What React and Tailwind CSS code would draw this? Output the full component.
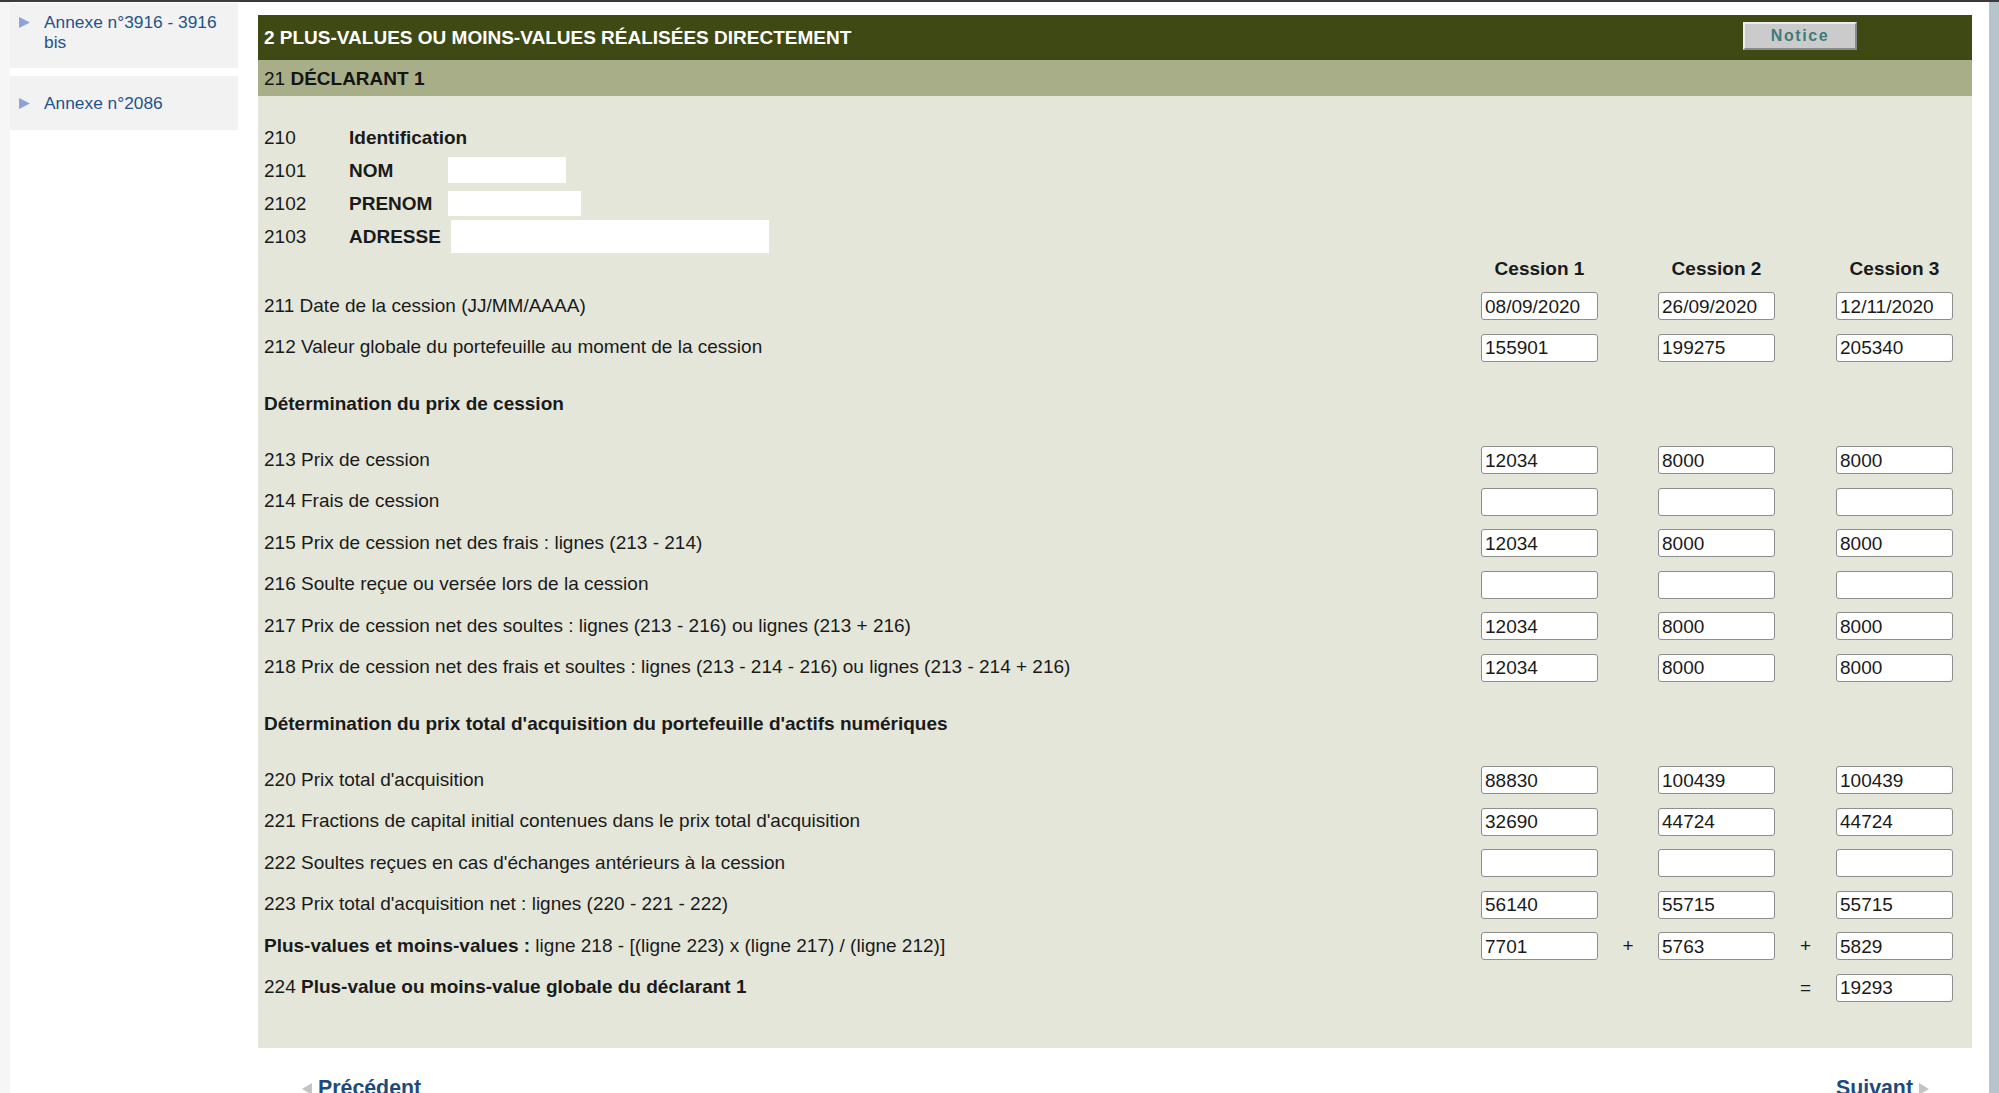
import React from "react";

const Box = ({ v }) => (
  <div className="w-[117px] h-[28px] bg-white border border-[#8e8e8e] rounded-[3px] pl-[3px] flex items-center text-[19px] text-[#1a1a1a] leading-none">
    {v}
  </div>
);

const Row = ({ label, vals, ops = ["", ""], eq = false }) => (
  <div className="h-[41.5px] flex items-center">
    <div className="flex-1 text-[19px] text-[#1a1a1a] leading-none whitespace-nowrap -mt-[2px]">{label}</div>
    {eq ? (
      <>
        <div className="w-[117px]" />
        <div className="w-[60px]" />
        <div className="w-[117px]" />
        <div className="w-[61px] text-center text-[19px] text-[#1a1a1a]">=</div>
        <Box v={vals[0]} />
      </>
    ) : (
      <>
        <Box v={vals[0]} />
        <div className="w-[60px] text-center text-[19px] text-[#1a1a1a]">{ops[0]}</div>
        <Box v={vals[1]} />
        <div className="w-[61px] text-center text-[19px] text-[#1a1a1a]">{ops[1]}</div>
        <Box v={vals[2]} />
      </>
    )}
  </div>
);

const Heading = ({ children }) => (
  <div className="h-[71px] flex items-center text-[19px] font-bold text-[#1a1a1a] leading-none pb-[2px]">{children}</div>
);

const Tri = () => (
  <svg width="13" height="13" viewBox="0 0 13 13" className="shrink-0">
    <polygon points="1,1 12,6.5 1,12" fill="#8ea2da" />
  </svg>
);

export default function App() {
  return (
    <div className="relative w-[1999px] h-[1093px] overflow-hidden bg-white font-['Liberation_Sans',Arial,sans-serif]">
      <div className="h-[2px] bg-[#3b3b3b]" />
      <div className="flex h-[1091px]">
        {/* Sidebar */}
        <div className="w-[258px] shrink-0 flex">
          <div className="w-[10px] bg-[#f6f6f6]" />
          <div className="w-[228px] pt-[1px] flex flex-col gap-[8px]">
            <div className="h-[65px] bg-[#f2f2f2] flex items-start pt-[9px] pl-[8px] gap-[13px]">
              <div className="pt-[4px]"><Tri /></div>
              <div className="w-[180px] text-[17.33px] leading-[20px] text-[#24538a]">
                Annexe n°3916 - 3916 bis
              </div>
            </div>
            <div className="h-[54px] bg-[#f2f2f2] flex items-center pl-[8px] gap-[13px]">
              <Tri />
              <div className="text-[17.33px] leading-[20px] text-[#24538a]">Annexe n°2086</div>
            </div>
          </div>
        </div>

        {/* Main */}
        <div className="w-[1714px] shrink-0 pt-[13px]">
          <div className="h-[45px] bg-[#3f4913] flex items-center justify-between pl-[6px] pr-[115px]">
            <div className="text-white font-bold text-[19px] leading-none">
              2 PLUS-VALUES OU MOINS-VALUES RÉALISÉES DIRECTEMENT
            </div>
            <div className="w-[114px] h-[28px] -mt-[3px] bg-[#cbcbcb] border-t-2 border-l-2 border-t-[#ececec] border-l-[#ececec] border-b-2 border-r-2 border-b-[#8a8a8a] border-r-[#8a8a8a] flex items-center justify-center text-[16px] font-bold tracking-[1.6px] text-[#3e7b7c] leading-none">
              Notice
            </div>
          </div>
          <div className="h-[36px] bg-[#a8ae87] flex items-center pl-[6px] text-[19px] text-[#141414] leading-none">
            <span>21&nbsp;</span>
            <span className="font-bold">DÉCLARANT 1</span>
          </div>
          <div className="bg-[#e4e6da] pl-[6px] pr-[19px] pt-[24.5px] pb-[39.5px]">
            {[
              ["210", "Identification", null],
              ["2101", "NOM", "w-[118px] h-[26px]"],
              ["2102", "PRENOM", "w-[133px] h-[25px]"],
              ["2103", "ADRESSE", "w-[318px] h-[33px] ml-[3px]"],
            ].map(([n, l, box]) => (
              <div key={n} className="h-[33px] flex items-center text-[19px] text-[#1a1a1a] leading-none">
                <div className="w-[85px]">{n}</div>
                <div className="w-[99px] font-bold">{l}</div>
                {box && <div className={"bg-white " + box} />}
              </div>
            ))}
            <div className="h-[33px] flex items-center text-[19px] font-bold text-[#1a1a1a] leading-none pb-[2px]">
              <div className="flex-1" />
              <div className="w-[117px] text-center">Cession 1</div>
              <div className="w-[60px]" />
              <div className="w-[117px] text-center">Cession 2</div>
              <div className="w-[61px]" />
              <div className="w-[117px] text-center">Cession 3</div>
            </div>
            <Row label="211 Date de la cession (JJ/MM/AAAA)" vals={["08/09/2020", "26/09/2020", "12/11/2020"]} />
            <Row label="212 Valeur globale du portefeuille au moment de la cession" vals={["155901", "199275", "205340"]} />
            <Heading>Détermination du prix de cession</Heading>
            <Row label="213 Prix de cession" vals={["12034", "8000", "8000"]} />
            <Row label="214 Frais de cession" vals={["", "", ""]} />
            <Row label="215 Prix de cession net des frais : lignes (213 - 214)" vals={["12034", "8000", "8000"]} />
            <Row label="216 Soulte reçue ou versée lors de la cession" vals={["", "", ""]} />
            <Row label="217 Prix de cession net des soultes : lignes (213 - 216) ou lignes (213 + 216)" vals={["12034", "8000", "8000"]} />
            <Row label="218 Prix de cession net des frais et soultes : lignes (213 - 214 - 216) ou lignes (213 - 214 + 216)" vals={["12034", "8000", "8000"]} />
            <Heading>Détermination du prix total d'acquisition du portefeuille d'actifs numériques</Heading>
            <Row label="220 Prix total d'acquisition" vals={["88830", "100439", "100439"]} />
            <Row label="221 Fractions de capital initial contenues dans le prix total d'acquisition" vals={["32690", "44724", "44724"]} />
            <Row label="222 Soultes reçues en cas d'échanges antérieurs à la cession" vals={["", "", ""]} />
            <Row label="223 Prix total d'acquisition net : lignes (220 - 221 - 222)" vals={["56140", "55715", "55715"]} />
            <Row
              label={<><span className="font-bold">Plus-values et moins-values :</span> ligne 218 - [(ligne 223) x (ligne 217) / (ligne 212)]</>}
              vals={["7701", "5763", "5829"]}
              ops={["+", "+"]}
            />
            <Row
              label={<>224 <span className="font-bold">Plus-value ou moins-value globale du déclarant 1</span></>}
              vals={["19293"]}
              eq
            />
          </div>
          <div className="flex justify-between pl-[44px] pr-[43px] pt-[30px]">
            <div className="flex items-center gap-[6px]">
              <svg width="10" height="12" viewBox="0 0 10 12"><polygon points="10,0 0,6 10,12" fill="#c4c4c4" /></svg>
              <span className="text-[21.33px] font-bold text-[#1d4a7c] leading-none">Précédent</span>
            </div>
            <div className="flex items-center gap-[6px]">
              <span className="text-[21.33px] font-bold text-[#1d4a7c] leading-none">Suivant</span>
              <svg width="10" height="12" viewBox="0 0 10 12"><polygon points="0,0 10,6 0,12" fill="#c4c4c4" /></svg>
            </div>
          </div>
        </div>

        <div className="w-[17px] shrink-0" />
        <div className="w-[10px] shrink-0 bg-[#b8c4cc]" />
      </div>
    </div>
  );
}
